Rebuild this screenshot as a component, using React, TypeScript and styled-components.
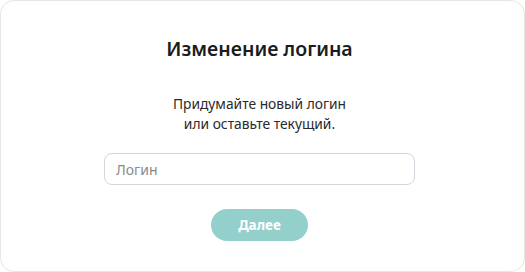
import styled, {createGlobalStyle} from "styled-components";

const GlobalStyle = createGlobalStyle`
    * { box-sizing: border-box; }
    body {
        margin: 0;
        background: #ffffff;
        font-family: "Noto Sans", "Open Sans", sans-serif;
    }
`;

export default function App() {
    return (
        <>
            <GlobalStyle/>
            <Card>
                <Title>Изменение логина</Title>
                <Hint>
                    Придумайте новый логин<br/>
                    или оставьте текущий.
                </Hint>
                <Input placeholder={"Логин"}/>
                <NextButton>Далее</NextButton>
            </Card>
        </>
    );
}

const Card = styled.div`
    width: 525px;
    height: 272px;
    border: 1px solid #e6e6e6;
    border-radius: 14px;
    background: #fff;
    display: flex;
    flex-direction: column;
    align-items: center;
    padding: 34px 6px 0 0;
`;

const Title = styled.h1`
    margin: 0;
    font-size: 19.5px;
    font-weight: 600;
    line-height: 28px;
    color: #1c1c1c;
`;

const Hint = styled.p`
    margin: 31px 0 0;
    font-size: 13.8px;
    line-height: 20px;
    text-align: center;
    color: #2a2a2a;
`;

const Input = styled.input`
    margin-top: 19px;
    width: 311px;
    height: 32px;
    border: 1px solid #d3d6dc;
    border-radius: 8px;
    padding: 0 11px;
    font-family: inherit;
    font-size: 14px;
    color: #333;
    outline: none;
    &::placeholder {
        color: #8a8a8a;
    }
`;

const NextButton = styled.button`
    margin-top: 24px;
    width: 97px;
    height: 32px;
    border: none;
    border-radius: 16px;
    background: #93cfcb;
    color: #fff;
    font-family: inherit;
    font-size: 13.5px;
    font-weight: 700;
    cursor: pointer;
`;
